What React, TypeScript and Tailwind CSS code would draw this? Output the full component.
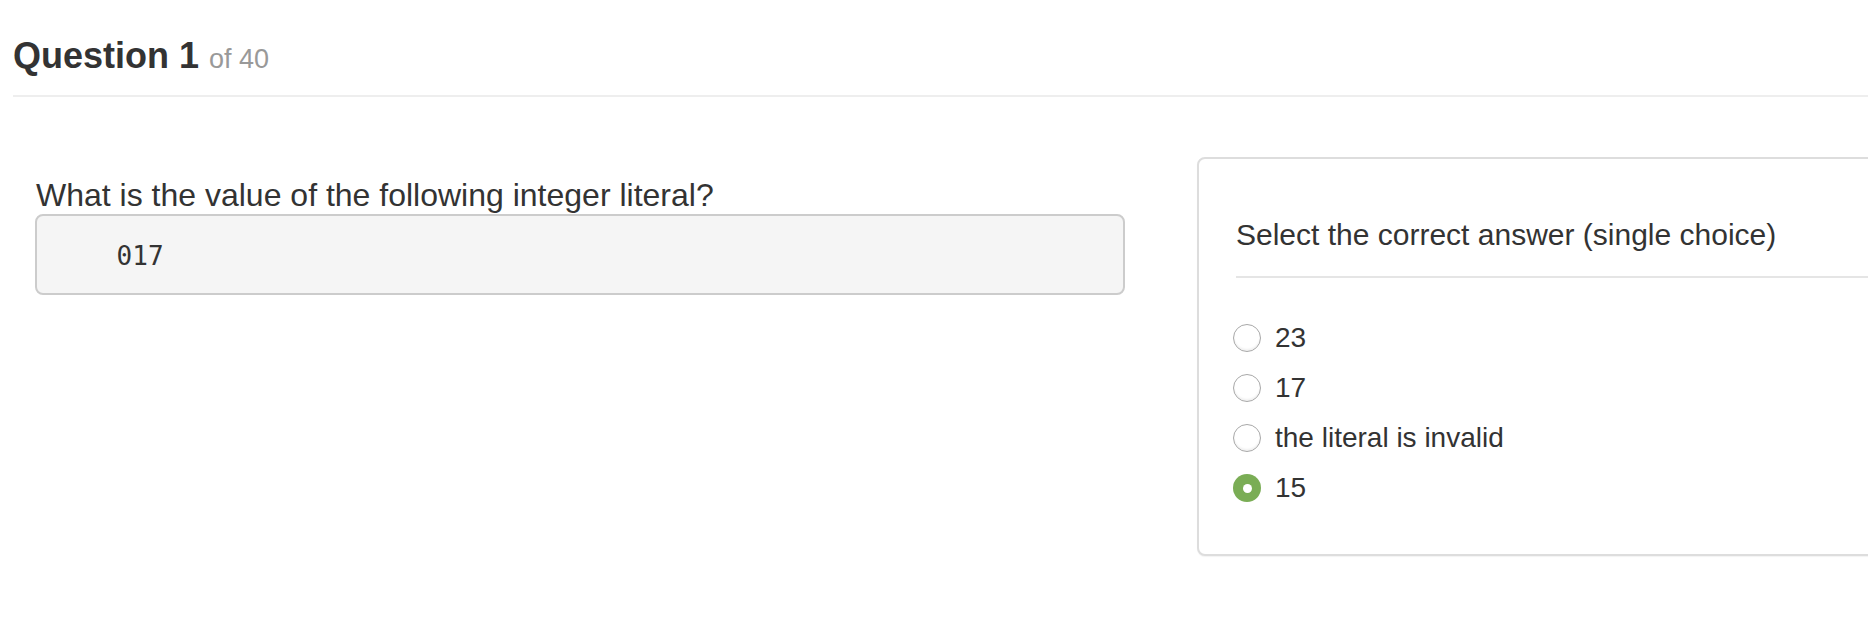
import React from "react";

const options = [
  { label: "23", checked: false },
  { label: "17", checked: false },
  { label: "the literal is invalid", checked: false },
  { label: "15", checked: true },
];

function Radio({ checked }: { checked: boolean }) {
  if (checked) {
    return (
      <span className="flex h-[28px] w-[28px] flex-none items-center justify-center rounded-full bg-[#7aad55]">
        <span className="block h-[9px] w-[9px] rounded-full bg-white" />
      </span>
    );
  }
  return (
    <span className="block h-[28px] w-[28px] flex-none rounded-full border-[1.5px] border-[#a8a8a8] bg-white shadow-[inset_0_-2px_2px_rgba(0,0,0,0.06)]" />
  );
}

export default function App() {
  return (
    <div
      className="h-[630px] w-[1868px] overflow-hidden bg-white text-[#333]"
      style={{ fontFamily: '"Liberation Sans", Arial, Helvetica, sans-serif' }}
    >
      <div className="ml-[13px] pt-[36px]">
        <h1 className="h-[40px] text-[36px] font-bold leading-[40px]">
          Question 1{" "}
          <span className="text-[27px] font-normal text-[#999]">of 40</span>
        </h1>
        <div className="mt-[19px] h-[2px] bg-[#eeeeee]" />
      </div>

      <div className="flex items-start">
        <div className="ml-[35px] mt-[79px] w-[1090px] flex-none">
          <p className="pl-[1px] text-[32px] leading-[38px]">
            What is the value of the following integer literal?
          </p>
          <pre
            className="h-[81px] rounded-[8px] border-2 border-[#cccccc] bg-[#f5f5f5] pl-[17px] pt-[4px] text-[26px] leading-[73px] text-[#333]"
            style={{ fontFamily: '"DejaVu Sans Mono", Menlo, monospace' }}
          >
            {"    017"}
          </pre>
        </div>

        <div className="ml-[72px] mt-[60px] w-[760px] flex-none rounded-[8px] border-2 border-[#dddddd] bg-white pb-[41px] pl-[37px] pr-[30px] pt-[56px] shadow-[0_1px_1px_rgba(0,0,0,0.05)]">
          <div className="text-[30px] leading-[40px]">
            Select the correct answer (single choice)
          </div>
          <div className="mt-[21px] h-[2px] bg-[#e5e5e5]" />
          <div className="mt-[35px] flex flex-col">
            {options.map((o) => (
              <label key={o.label} className="flex h-[50px] items-center">
                <span className="-ml-[3px] flex">
                  <Radio checked={o.checked} />
                </span>
                <span className="ml-[14px] text-[28px] leading-[50px]">
                  {o.label}
                </span>
              </label>
            ))}
          </div>
        </div>
      </div>
    </div>
  );
}
